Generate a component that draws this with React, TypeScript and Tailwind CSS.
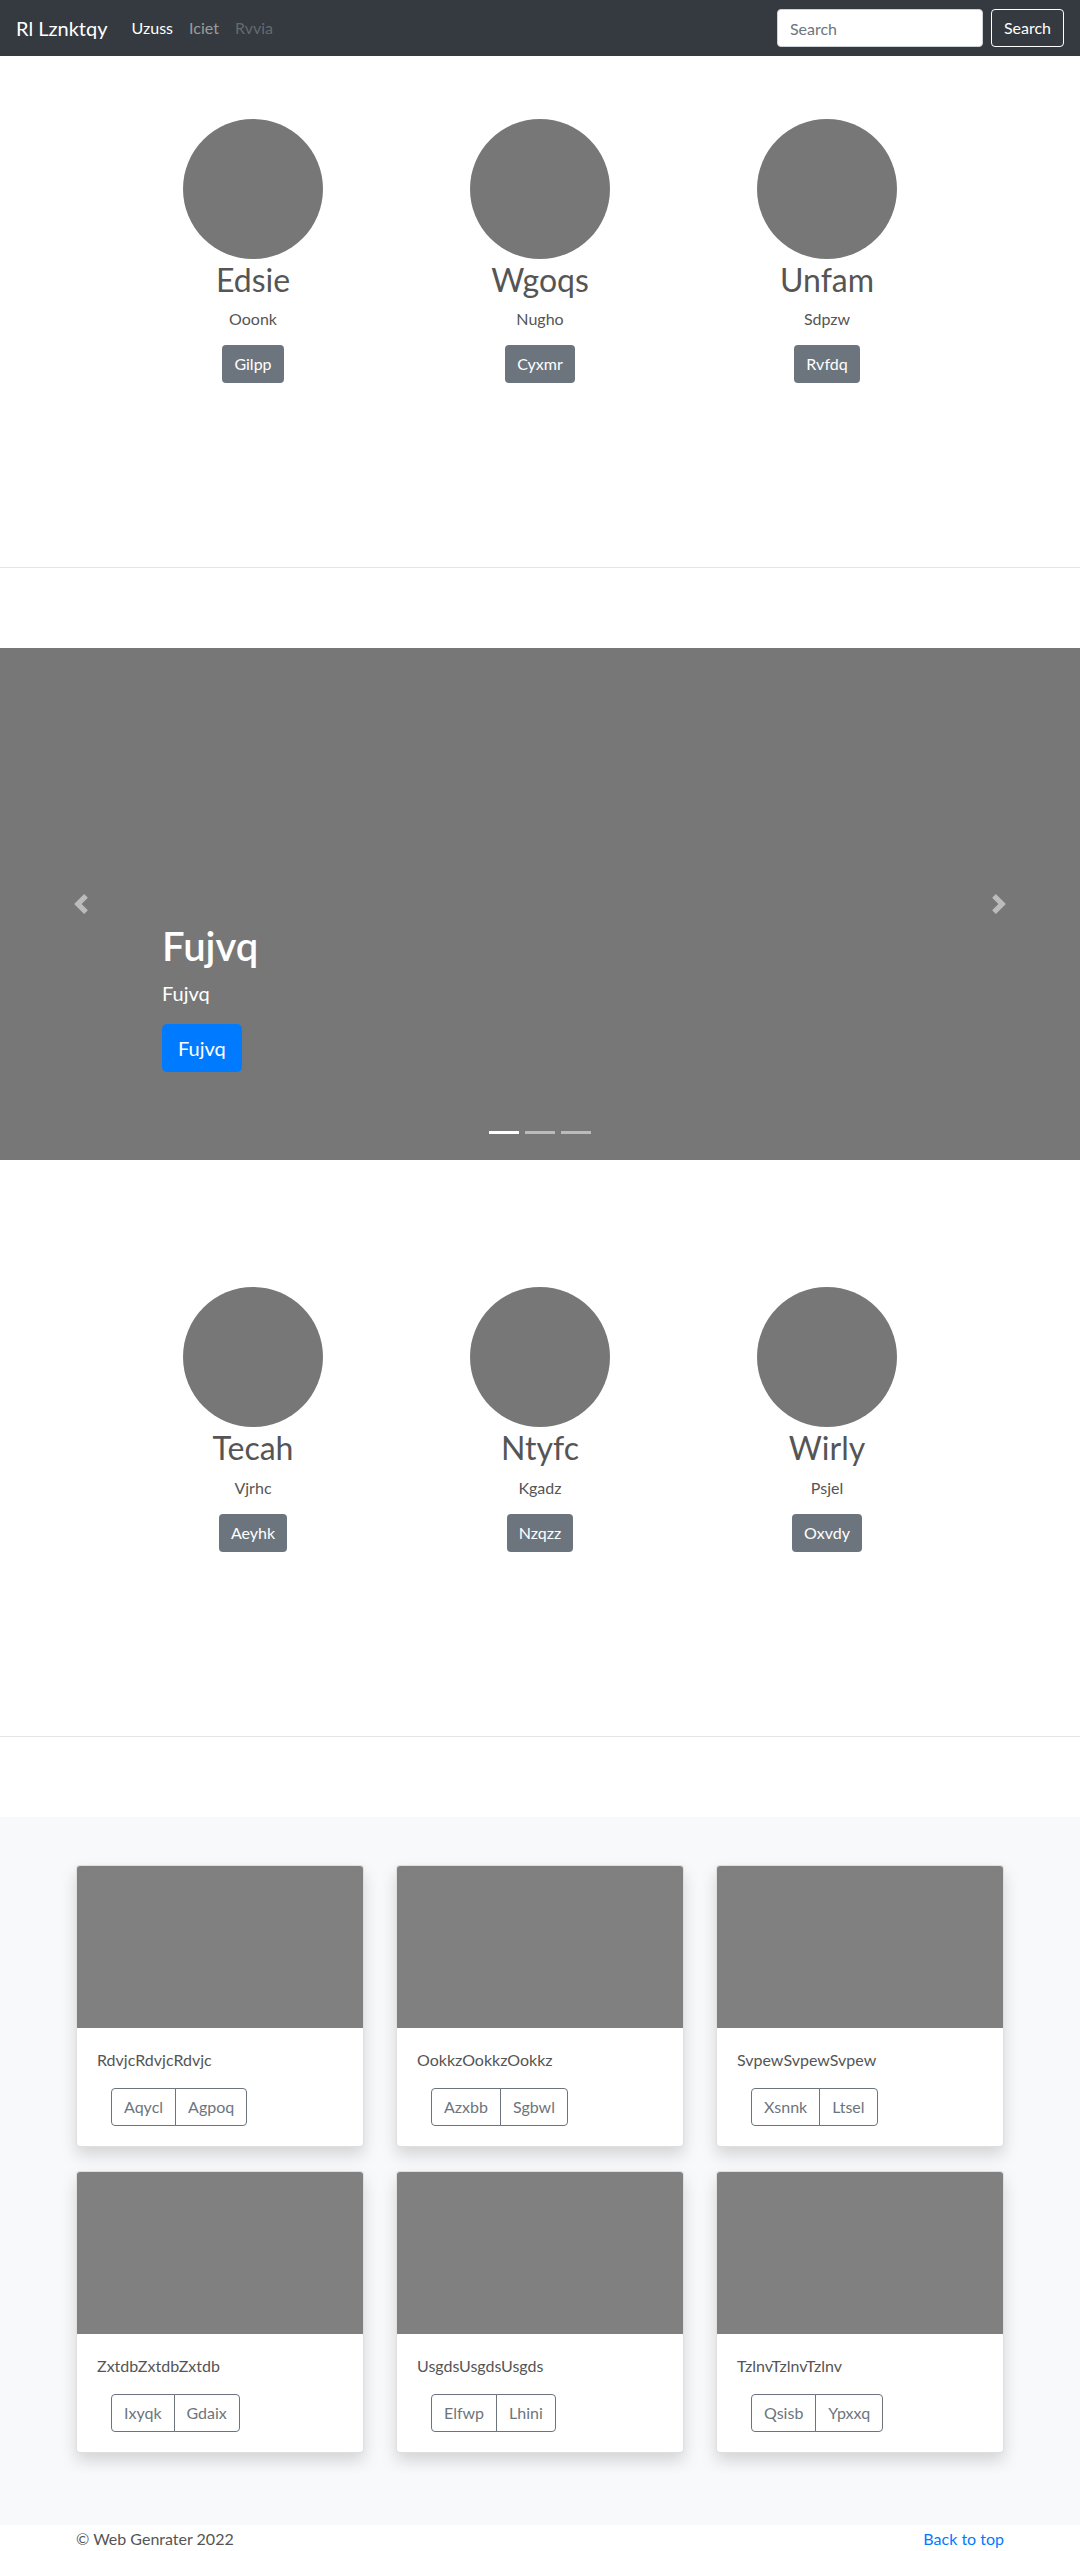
import React from "react";

const topCols = [
  { name: "Edsie", sub: "Ooonk", btn: "Gilpp" },
  { name: "Wgoqs", sub: "Nugho", btn: "Cyxmr" },
  { name: "Unfam", sub: "Sdpzw", btn: "Rvfdq" },
];

const bottomCols = [
  { name: "Tecah", sub: "Vjrhc", btn: "Aeyhk" },
  { name: "Ntyfc", sub: "Kgadz", btn: "Nzqzz" },
  { name: "Wirly", sub: "Psjel", btn: "Oxvdy" },
];

const cards = [
  { text: "RdvjcRdvjcRdvjc", a: "Aqycl", b: "Agpoq" },
  { text: "OokkzOokkzOokkz", a: "Azxbb", b: "Sgbwl" },
  { text: "SvpewSvpewSvpew", a: "Xsnnk", b: "Ltsel" },
  { text: "ZxtdbZxtdbZxtdb", a: "Ixyqk", b: "Gdaix" },
  { text: "UsgdsUsgdsUsgds", a: "Elfwp", b: "Lhini" },
  { text: "TzlnvTzlnvTzlnv", a: "Qsisb", b: "Ypxxq" },
];

function Marketing({ cols }: { cols: { name: string; sub: string; btn: string }[] }) {
  return (
    <div className="mx-auto w-[861px] grid grid-cols-3">
      {cols.map((c) => (
        <div key={c.name} className="flex flex-col items-center">
          <div className="w-[140px] h-[140px] rounded-full bg-[#777]" />
          <h2 className="mt-[2px] mb-2 text-[32px] leading-[1.2] font-normal text-[#555]">{c.name}</h2>
          <p className="mb-[14px] text-base leading-6 text-[#555]">{c.sub}</p>
          <button className="h-[38px] px-3 rounded bg-[#6c757d] text-white text-base">{c.btn}</button>
        </div>
      ))}
    </div>
  );
}

export default function App() {
  return (
    <div className="font-['Lato','Liberation_Sans',sans-serif] bg-white text-[#555]">
      {/* navbar */}
      <nav className="h-14 bg-[#343a40] flex items-center px-4">
        <span className="text-xl text-white mr-4">Rl Lznktqy</span>
        <a className="px-2 text-base text-white">Uzuss</a>
        <a className="px-2 text-base text-white/50">Iciet</a>
        <a className="px-2 text-base text-white/25">Rvvia</a>
        <div className="ml-auto flex items-center">
          <input
            placeholder="Search"
            className="w-[206px] h-[38px] rounded bg-white border border-[#ced4da] px-3 text-base text-[#495057] placeholder:text-[#6c757d] outline-none"
          />
          <button className="ml-2 h-[38px] px-3 rounded border border-white text-white text-base">Search</button>
        </div>
      </nav>

      <section className="pt-[63px] pb-[184px]">
        <Marketing cols={topCols} />
      </section>
      <hr className="border-0 border-t border-[#e5e5e5]" />

      {/* carousel */}
      <div className="mt-20 relative h-[512px] bg-[#777] overflow-hidden">
        <div className="absolute inset-y-0 left-[15%] right-[15%] flex flex-col justify-end items-start pb-[88px] text-white">
          <h1 className="mb-2 text-[40px] leading-[1.2] font-semibold">Fujvq</h1>
          <p className="mb-4 text-xl leading-[1.5]">Fujvq</p>
          <button className="h-12 px-4 rounded-[5px] bg-[#007bff] text-white text-xl">Fujvq</button>
        </div>
        <div className="absolute left-0 inset-y-0 w-[15%] flex items-center justify-center opacity-50">
          <svg width="20" height="20" viewBox="0 0 8 8" fill="#fff">
            <path d="M5.25 0l-4 4 4 4 1.5-1.5L4.25 4l2.5-2.5L5.25 0z" />
          </svg>
        </div>
        <div className="absolute right-0 inset-y-0 w-[15%] flex items-center justify-center opacity-50">
          <svg width="20" height="20" viewBox="0 0 8 8" fill="#fff">
            <path d="M2.75 0l-1.5 1.5L3.75 4l-2.5 2.5L2.75 8l4-4-4-4z" />
          </svg>
        </div>
        <div className="absolute bottom-[26px] inset-x-0 flex justify-center gap-1.5">
          <span className="w-[30px] h-[3px] bg-white" />
          <span className="w-[30px] h-[3px] bg-white/50" />
          <span className="w-[30px] h-[3px] bg-white/50" />
        </div>
      </div>

      <section className="pt-[127px] pb-[184px]">
        <Marketing cols={bottomCols} />
      </section>
      <hr className="border-0 border-t border-[#e5e5e5]" />

      {/* album */}
      <div className="mt-20 bg-[#f8f9fa] pt-12 pb-[72px]">
        <div className="mx-auto w-[928px] grid grid-cols-3 gap-x-8 gap-y-6">
          {cards.map((c) => (
            <div
              key={c.text}
              className="bg-white rounded border border-black/[0.125] shadow-[0_0.5rem_1rem_rgba(0,0,0,0.15)] overflow-hidden"
            >
              <div className="h-[162px] bg-[#808080]" />
              <div className="p-5">
                <p className="mb-4 text-base leading-6 text-[#555]">{c.text}</p>
                <div className="ml-[14px] flex">
                  <button className="h-[38px] px-3 border border-[#6c757d] rounded-l text-[#6c757d] text-base">{c.a}</button>
                  <button className="h-[38px] px-3 -ml-px border border-[#6c757d] rounded-r text-[#6c757d] text-base">{c.b}</button>
                </div>
              </div>
            </div>
          ))}
        </div>
      </div>

      <footer className="mx-auto w-[928px] flex justify-between pt-[2px] text-base leading-6">
        <p className="text-[#555]">© Web Genrater 2022</p>
        <a className="text-[#007bff]">Back to top</a>
      </footer>
    </div>
  );
}
